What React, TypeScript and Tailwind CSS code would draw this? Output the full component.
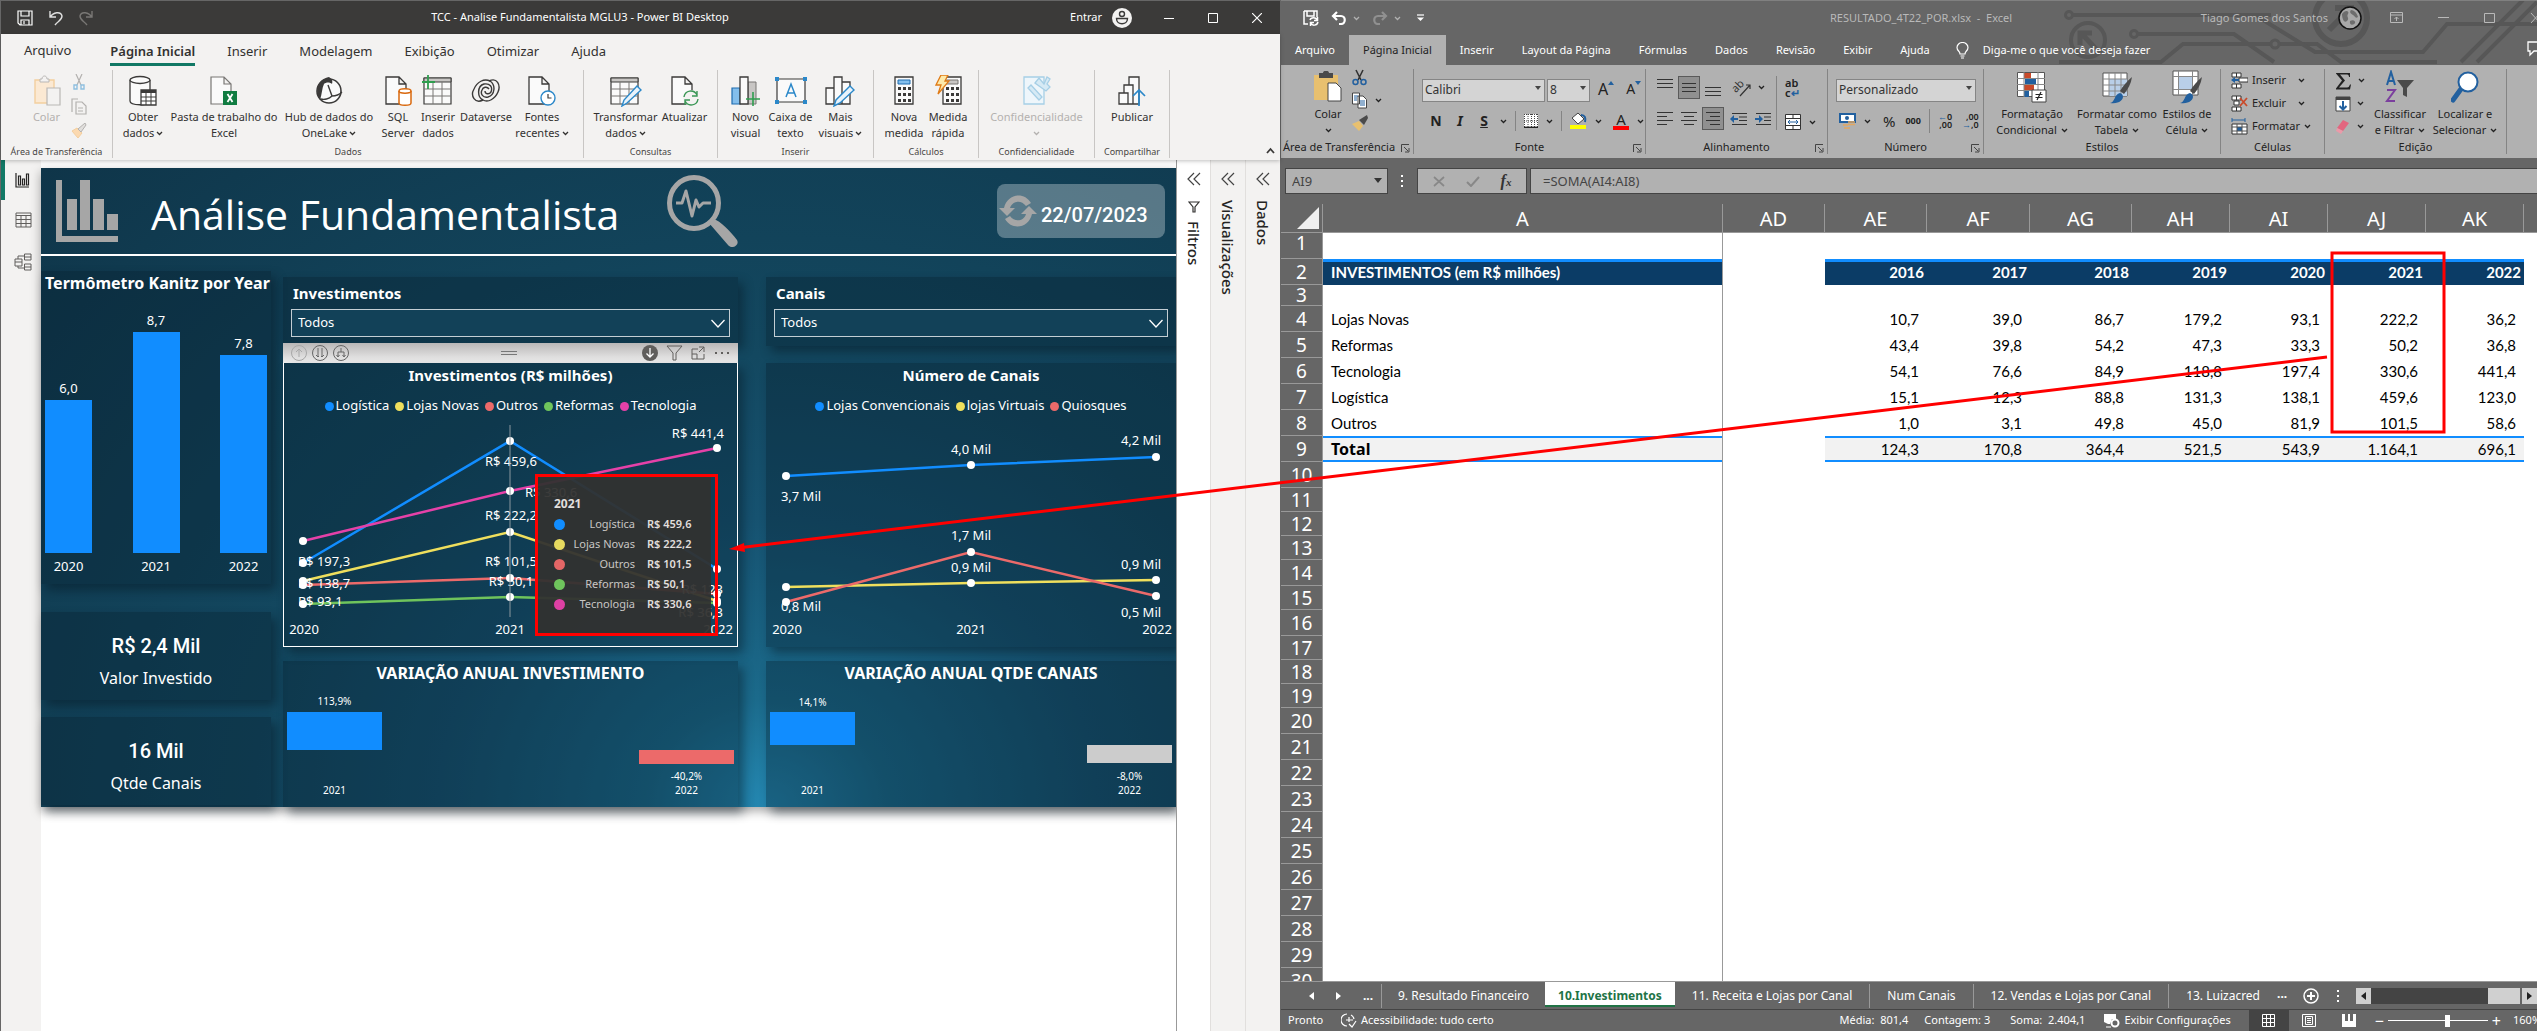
import React from "react";

type Kids = { children?: React.ReactNode };

/* ---------- shared bits ---------- */

function Svg({ w, h, vb, className = "", children }: Kids & { w: number; h: number; vb?: string; className?: string }) {
  return (
    <svg width={w} height={h} viewBox={vb ?? `0 0 ${w} ${h}`} fill="none" className={`shrink-0 ${className}`} aria-hidden="true">
      {children}
    </svg>
  );
}

function Chevron({ className = "" }: { className?: string }) {
  return (
    <Svg w={7} h={5} className={`inline-block ${className}`}>
      <path d="M1 1l2.500 2.500L6 1" stroke="currentColor" strokeWidth="1.3" />
    </Svg>
  );
}

/* ---------- Power BI icons ---------- */

const ink = "#3b3a39";

const doc = <path d="M2 2h13l7 7v20H2z M15 2v7h7" fill="#fafafa" stroke={ink} strokeWidth="1.3" />;

const sheet = (
  <>
    <path d="M2 3h27v26H2z" fill="#fafafa" stroke={ink} strokeWidth="1.2" />
    <path d="M2 3h27v4H2z" fill="#c8c6c4" stroke={ink} />
    <path d="M2 14h27M2 21h27M11 7v22M20 7v22" stroke="#797775" />
  </>
);

const pencil = <path d="M13 31l2-6L28 11l4 4-14 13z" fill="#e8f3fb" stroke="#2b88c9" strokeWidth="1.4" />;

const pasteIcon = (
  <Svg w={28} h={32}>
    <path d="M2 5h19v23H2z" fill="#fbe9d3" stroke="#f3cf9f" strokeWidth="1.4" />
    <path d="M7 7V4h2c0-4 5-4 5 0h2v3z" fill="#f3f2f1" stroke="#b9b7b5" />
    <path d="M14 13h13v17H14z" fill="#f3f2f1" stroke="#b9b7b5" strokeWidth="1.2" />
  </Svg>
);
const getDataIcon = (
  <Svg w={28} h={32}>
    <path d="M1 5v21c0 5 20 5 20 0V5" fill="#fafafa" stroke={ink} strokeWidth="1.3" />
    <ellipse cx="11" cy="5" rx="10" ry="3.5" fill="#fafafa" stroke={ink} strokeWidth="1.3" />
    <path d="M12 15h15v15H12z" fill="#fff" stroke={ink} strokeWidth="1.3" />
    <path d="M12 15h15v3H12z" fill={ink} />
    <path d="M12 22h15M12 26h15M17 18v12M22 18v12" stroke={ink} />
  </Svg>
);
const excelDocIcon = (
  <Svg w={30} h={32}>
    <path d="M2 2h13l7 7v20H2z M15 2v7h7" fill="#fafafa" stroke="#797775" strokeWidth="1.2" />
    <path d="M14 16h14v14H14z" fill="#107c41" />
    <path d="M18.500 19l5 8M23.500 19l-5 8" stroke="#fff" strokeWidth="1.8" />
  </Svg>
);
const oneLakeIcon = (
  <Svg w={30} h={32}>
    <circle cx="15" cy="16" r="12" fill="#fafafa" stroke={ink} strokeWidth="1.6" />
    <path d="M15 2C4 4 0 15 6 25c2-6 2-12 4-16 2-2 6-2 8 0 1-3 0-5-3-7z" fill={ink} />
    <path d="M14 10l4 11c4 0 7-1 10-4M18 21c-3 3-8 4-11 3" stroke={ink} strokeWidth="1.4" />
  </Svg>
);
const sqlIcon = (
  <Svg w={29} h={32}>
    {doc}
    <path d="M15 16v12c0 3 12 3 12 0V16" fill="#fff" stroke="#d9680d" strokeWidth="1.5" />
    <ellipse cx="21" cy="16" rx="6" ry="2.200" fill="#fff" stroke="#d9680d" strokeWidth="1.5" />
  </Svg>
);
const enterDataIcon = (
  <Svg w={32} h={32}>
    {sheet}
    <path d="M6 0v14M-1 7h14" stroke="#2f9e4f" strokeWidth="1.800" />
  </Svg>
);
const dataverseIcon = (
  <Svg w={30} h={32}>
    <path d="M12 25C4 29-1 21 3 14 6 7 13 3 19 6c6 4 5 14-2 16-5 1-8-3-6-7 1-3 5-4 7-1" stroke={ink} strokeWidth="1.4" />
    <path d="M18 6c8-4 12 4 9 11-3 7-10 11-15 8-6-3-6-14 1-16 6-1 9 3 7 8-2 3-6 2-6-1" stroke={ink} strokeWidth="1.4" />
  </Svg>
);
const recentIcon = (
  <Svg w={30} h={32}>
    {doc}
    <circle cx="21" cy="23" r="7" fill="#fff" stroke="#2b88c9" strokeWidth="1.4" />
    <path d="M21 19v4h3.500" stroke={ink} strokeWidth="1.2" />
  </Svg>
);
const transformIcon = (
  <Svg w={33} h={32}>
    {sheet}
    {pencil}
  </Svg>
);
const refreshIcon = (
  <Svg w={30} h={32}>
    {doc}
    <circle cx="21" cy="23" r="8" fill="#f3f2f1" />
    <path d="M14 22c1-7 10-8 13-2M28 24c-1 7-10 8-13 2M27 16v5h-5M15 30v-5h5" stroke="#3a9655" strokeWidth="1.4" />
  </Svg>
);
const newVisualIcon = (
  <Svg w={30} h={32}>
    <path d="M1 13h8v16H1z" fill="#83beec" stroke="#1f6cb0" strokeWidth="1.2" />
    <path d="M17 7h8v22h-8z" fill="#c8c6c4" stroke="#797775" />
    <path d="M9 2h8v27H9z" fill="#fafafa" stroke={ink} strokeWidth="1.3" />
    <path d="M22 17v14M15 24h14" stroke="#2f9e4f" strokeWidth="1.6" />
  </Svg>
);
const textBoxIcon = (
  <Svg w={32} h={32}>
    <path d="M2 4h28v23H2z" fill="#fafafa" stroke={ink} strokeWidth="1.2" />
    <path d="M0 2h4v4H0zM28 2h4v4h-4zM0 25h4v4H0zM28 25h4v4h-4z" fill="#2b88c9" />
    <path d="M11 22l5-13 5 13M13 18h6" stroke="#2b88c9" strokeWidth="1.500" />
  </Svg>
);
const moreVisualsIcon = (
  <Svg w={32} h={32}>
    <path d="M1 13h8v16H1zM17 7h8v22h-8zM9 2h8v27H9z" fill="#fafafa" stroke={ink} strokeWidth="1.3" />
    <path d="M9 31l2-6 14-14 4 4-14 13z" fill="#e8f3fb" stroke="#2b88c9" strokeWidth="1.400" />
  </Svg>
);
const calcKeys = "M4 12h3v3H4zM9 12h3v3H9zM14 12h3v3h-3zM4 18h3v3H4zM9 18h3v3H9zM14 18h3v3h-3zM4 24h3v3H4zM9 24h3v3H9zM14 24h3v3h-3z";
const calcIcon = (
  <Svg w={20} h={32}>
    <path d="M1 2h18v27H1z" fill="#fafafa" stroke={ink} strokeWidth="1.3" />
    <path d="M4 5h12v4H4z" fill="#83beec" stroke="#1f6cb0" />
    <path d={calcKeys} fill={ink} />
  </Svg>
);
const quickCalcIcon = (
  <Svg w={27} h={32} vb="-7 0 27 32">
    <path d="M1 2h18v27H1z" fill="#fafafa" stroke={ink} strokeWidth="1.3" />
    <path d="M4 5h12v4H4z" fill="#c8c6c4" stroke="#797775" />
    <path d={calcKeys} fill={ink} />
    <path d="M-1 0h7l-3 6h4l-11 13 3-9h-5z" fill="#fde9a9" stroke="#e07b16" strokeWidth="1.3" />
  </Svg>
);
const sensitivityIcon = (
  <Svg w={28} h={32}>
    <path d="M1 2h20v27H1z" fill="#eef6fb" stroke="#a6cfe6" strokeWidth="1.3" />
    <path d="M5 13l3-3 11 12-3 3zM12 8l4-5 5 6 3-7 3 2-3 5 3 3-4 4z" fill="#d6eaf5" stroke="#a6cfe6" strokeWidth="1.3" />
  </Svg>
);
const publishIcon = (
  <Svg w={28} h={32}>
    <path d="M1 18h9v11H1zM6 18v-8h9v19h-5M11 10V2h10v27h-6" fill="#fafafa" stroke={ink} strokeWidth="1.3" />
    <path d="M21 31V15M15 21l6-6 6 6" stroke="#2b88c9" strokeWidth="1.700" />
  </Svg>
);

/* ---------- Power BI ribbon ---------- */

function BigButton({ icon, l1, l2, caret, w, off }: { icon: React.ReactNode; l1: string; l2?: string; caret?: boolean; w: string; off?: boolean }) {
  return (
    <button className={`flex shrink-0 flex-col items-center whitespace-nowrap text-[11px] leading-4 ${w} ${off ? "text-[#b3b1af]" : "text-[#323130]"}`}>
      <span className="mb-0.5 flex h-[33px] items-end">{icon}</span>
      <span>{l1}</span>
      <span className="flex h-4 items-center gap-0.5">
        {l2}
        {caret && <Chevron />}
      </span>
    </button>
  );
}

function PbiGroup({ label, w, children }: Kids & { label: string; w: string }) {
  return (
    <section className={`flex shrink-0 flex-col border-r border-[#c8c6c4] ${w}`}>
      <div className="flex flex-1 justify-center pt-1">{children}</div>
      <h3 className="text-center text-[9px] leading-3 text-[#484644]">{label}</h3>
    </section>
  );
}

function PbiRibbon() {
  const tabs = ["Página Inicial", "Inserir", "Modelagem", "Exibição", "Otimizar", "Ajuda"];
  return (
    <header className="relative z-10 bg-[#f3f2f1] shadow-[0_1px_4px_rgba(0,0,0,0.25)]">
      <nav className="flex h-8 items-start pl-1 text-[13px] leading-8 text-[#323130]">
        <button className="mr-1 h-8 px-[19px]">Arquivo</button>
        {tabs.map((t, i) => (
          <button key={t} className={`h-8 px-4 ${i === 0 ? "font-semibold" : ""}`}>
            <span className={`block h-[31px] ${i === 0 ? "border-b-[3px] border-[#117865]" : ""}`}>{t}</span>
          </button>
        ))}
      </nav>
      <div className="flex h-[94px] items-stretch pt-1 pb-0.5">
        <PbiGroup label="Área de Transferência" w="w-28">
          <BigButton icon={pasteIcon} l1="Colar" w="w-10" off />
          <div className="ml-1 flex flex-col items-center gap-2">
            <button aria-label="Recortar">
              <Svg w={12} h={16}>
                <path d="M3 0l5 11M9 0L4 11" stroke="#b3b1af" strokeWidth="1.2" />
                <path d="M1 11h3v4H1zM8 11h3v4H8z" stroke="#8fc0e0" strokeWidth="1.4" />
              </Svg>
            </button>
            <button aria-label="Copiar">
              <Svg w={16} h={17}>
                <path d="M1 14V1h6M5 4h6l4 4v8H5zM7 10h5M7 13h5" stroke="#b3b1af" strokeWidth="1.2" />
              </Svg>
            </button>
            <button aria-label="Pincel de formatação">
              <Svg w={16} h={16}>
                <path d="M1 8l5-3 5 5-4 5z" fill="#fbd9b0" stroke="#f3cf9f" />
                <path d="M7 6l7-6 1 2-5 7z" fill="#e1dfdd" stroke="#b3b1af" />
              </Svg>
            </button>
          </div>
        </PbiGroup>
        <PbiGroup label="Dados" w="w-[471px]">
          <div className="-ml-2 flex">
            <BigButton icon={getDataIcon} l1="Obter" l2="dados" caret w="w-[50px]" />
            <BigButton icon={excelDocIcon} l1="Pasta de trabalho do" l2="Excel" w="w-28" />
            <BigButton icon={oneLakeIcon} l1="Hub de dados do" l2="OneLake" caret w="w-[98px]" />
            <BigButton icon={sqlIcon} l1="SQL" l2="Server" w="w-10" />
            <BigButton icon={enterDataIcon} l1="Inserir" l2="dados" w="w-10" />
            <BigButton icon={dataverseIcon} l1="Dataverse" w="w-14" />
            <BigButton icon={recentIcon} l1="Fontes" l2="recentes" caret w="w-14" />
          </div>
        </PbiGroup>
        <PbiGroup label="Consultas" w="w-[134px]">
          <BigButton icon={transformIcon} l1="Transformar" l2="dados" caret w="w-[68px]" />
          <BigButton icon={refreshIcon} l1="Atualizar" w="w-[50px]" />
        </PbiGroup>
        <PbiGroup label="Inserir" w="w-[156px]">
          <BigButton icon={newVisualIcon} l1="Novo" l2="visual" w="w-10" />
          <BigButton icon={textBoxIcon} l1="Caixa de" l2="texto" w="w-[50px]" />
          <BigButton icon={moreVisualsIcon} l1="Mais" l2="visuais" caret w="w-[50px]" />
        </PbiGroup>
        <PbiGroup label="Cálculos" w="w-[105px]">
          <BigButton icon={calcIcon} l1="Nova" l2="medida" w="w-11" />
          <BigButton icon={quickCalcIcon} l1="Medida" l2="rápida" w="w-11" />
        </PbiGroup>
        <PbiGroup label="Confidencialidade" w="w-[116px]">
          <BigButton icon={sensitivityIcon} l1="Confidencialidade" caret w="w-24" off />
        </PbiGroup>
        <PbiGroup label="Compartilhar" w="w-[75px]">
          <BigButton icon={publishIcon} l1="Publicar" w="w-14" />
        </PbiGroup>
        <button aria-label="Recolher faixa" className="mr-1 ml-auto self-end pb-1">
          <Svg w={11} h={7}>
            <path d="M2 6l3.500-4L9 6" stroke={ink} strokeWidth="1.800" />
          </Svg>
        </button>
      </div>
    </header>
  );
}

function PbiTitleBar() {
  return (
    <div className="grid h-[34px] grid-cols-[426fr_auto_546fr] items-center border-t border-[#666] bg-[#3b3a39] text-[11px] text-white">
      <div className="flex items-center gap-4 pl-4">
        <button aria-label="Salvar">
          <Svg w={16} h={16}>
            <path d="M1 1h14v14H3l-2-2zM4 1v5h8V1M4 15v-5h8v5M7 11v3" stroke="#fff" strokeWidth="1.2" />
          </Svg>
        </button>
        <button aria-label="Desfazer">
          <Svg w={14} h={16}>
            <path d="M1 1v6h6M1.500 7C4 2 12 1 13 6c0 4-4 5-7 9" stroke="#e0e0e0" strokeWidth="1.4" />
          </Svg>
        </button>
        <button aria-label="Refazer">
          <Svg w={14} h={16}>
            <path d="M13 1v6H7M12.500 7C10 2 2 1 1 6c0 4 4 5 7 9" stroke="#797775" strokeWidth="1.400" />
          </Svg>
        </button>
      </div>
      <h1>TCC - Analise Fundamentalista MGLU3 - Power BI Desktop</h1>
      <div className="flex items-center justify-end pr-[18px]">
        <button className="flex items-center gap-2.5">
          Entrar
          <Svg w={20} h={20}>
            <circle cx="10" cy="10" r="10" fill="#f3f2f1" />
            <circle cx="10" cy="6" r="2.500" stroke={ink} strokeWidth="1.400" />
            <path d="M4.500 10.500h11c0 7-11 7-11 0z" stroke={ink} strokeWidth="1.400" />
          </Svg>
        </button>
        <button aria-label="Minimizar" className="ml-8"><Svg w={10} h={10}><path d="M0 5.500h10" stroke="#fff" /></Svg></button>
        <button aria-label="Maximizar" className="ml-[34px]"><Svg w={10} h={10}><path d="M.5.5h9v9h-9z" stroke="#fff" /></Svg></button>
        <button aria-label="Fechar" className="ml-[34px]"><Svg w={10} h={10}><path d="M0 0l10 10M10 0L0 10" stroke="#fff" strokeWidth="1.200" /></Svg></button>
      </div>
    </div>
  );
}

/* ---------- dashboard ---------- */

const panel = "bg-[#061c2a]/35 shadow-[5px_6px_10px_rgba(5,20,30,0.45)]";

const BLUE = "#118dff";
const YELLOW = "#efdf5d";
const RED = "#ec6a6a";
const GREEN = "#6fc45c";
const PINK = "#e541a8";

type Series = { color: string; pts: [number, number][] };
type Note = { t: string; x: number; y: number; a?: "start" | "middle" | "end" };

function LineChart({ vb, series, notes, guide, label }: { vb: string; series: Series[]; notes: Note[]; guide?: number; label: string }) {
  return (
    <svg viewBox={vb} className="block w-full" role="img" aria-label={label}>
      {series.map((s) => (
        <polyline key={s.color} points={s.pts.map((p) => p.join(",")).join(" ")} fill="none" stroke={s.color} strokeWidth="2.500" />
      ))}
      {notes.map((n) => (
        <text key={n.t + n.y + n.x} x={n.x} y={n.y + 5} textAnchor={n.a ?? "middle"} fontSize="13" fill="#fff">
          {n.t}
        </text>
      ))}
      {series.flatMap((s) => s.pts.map((p) => <circle key={s.color + p[0]} cx={p[0]} cy={p[1]} r="4" fill="#fff" />))}
      {guide && <path d={`M${guide} 425V617`} stroke="#8a979e" />}
    </svg>
  );
}

function Legend({ items }: { items: [string, string][] }) {
  return (
    <ul className="flex h-9 items-center justify-center gap-1.5 pt-0.5 text-[13px] whitespace-nowrap">
      {items.map(([t, c]) => (
        <li key={t} className="flex items-center gap-0.5">
          <span className={`size-[9px] rounded-full ${c}`} />
          {t}
        </li>
      ))}
    </ul>
  );
}

function Slicer({ label, id, h }: { label: string; id: string; h: string }) {
  return (
    <div className={`${panel} ${h} px-2 pt-1.5`}>
      <label htmlFor={id} className="block h-[26px] pl-0.5 text-[15px] leading-5 font-bold">{label}</label>
      <div className="relative">
        <select id={id} className="block h-7 w-full appearance-none border border-[#c3ced4] bg-[#124158] px-1.5 text-[13px] text-white">
          <option>Todos</option>
        </select>
        <Svg w={16} h={10} className="pointer-events-none absolute top-2.5 right-1">
          <path d="M1.500 1L8 8l6.500-7" stroke="#fff" strokeWidth="1.300" />
        </Svg>
      </div>
    </div>
  );
}

function Tooltip() {
  const rows: [string, string, string][] = [
    ["Logística", "R$ 459,6", "bg-[#118dff]"],
    ["Lojas Novas", "R$ 222,2", "bg-[#e6d95f]"],
    ["Outros", "R$ 101,5", "bg-[#e46666]"],
    ["Reformas", "R$ 50,1", "bg-[#6fc45c]"],
    ["Tecnologia", "R$ 330,6", "bg-[#dd40a4]"],
  ];
  return (
    <div className="absolute top-[111px] left-[251px] h-[162px] w-[183px] border-[3px] border-[#f00]">
      <div className="mr-1 h-full bg-[#323130]/95 px-4 pt-[17px] text-[#e1dfdd]">
        <h4 className="text-[12px] leading-5 font-bold">2021</h4>
        <table className="w-full table-fixed text-[11px] whitespace-nowrap">
          <colgroup>
            <col className="w-3" />
            <col />
            <col className="w-[60px]" />
          </colgroup>
          <tbody>
            {rows.map(([n, v, c]) => (
              <tr key={n} className="h-5">
                <td className="p-0"><span className={`block size-[11px] rounded-full ${c}`} /></td>
                <td className="p-0 text-right text-[#c8c6c4]">{n}</td>
                <td className="p-0 pl-3 font-semibold">{v}</td>
              </tr>
            ))}
          </tbody>
        </table>
      </div>
    </div>
  );
}

function VisualHeader() {
  return (
    <div className="flex h-5 items-center bg-gradient-to-b from-[#b9b7b7] to-[#f0f0f0] px-2">
      <Svg w={66} h={18} className="-ml-1">
        <circle cx="12" cy="9" r="7.500" stroke="#a8a8a8" />
        <path d="M12 13V5M9 8l3-3 3 3" stroke="#a8a8a8" />
        <circle cx="33" cy="9" r="7.500" stroke="#666" />
        <path d="M31 4v9M29 11l2 2 1-1M35 4v9M34 12l1 1 2-2" stroke="#666" />
        <circle cx="54" cy="9" r="7.500" stroke="#666" />
        <path d="M54 4v4M51 12V8h6v4M49.500 11l1.500 2 1.500-2M55.500 11l1.500 2 1.500-2" stroke="#666" />
      </Svg>
      <span className="mr-auto ml-[148px] h-1 w-4 border-y border-[#777]" />
      <Svg w={88} h={18}>
        <circle cx="8" cy="9" r="8" fill="#605e5c" />
        <path d="M8 4v9M4.500 9.500L8 13l3.500-3.500" stroke="#fff" strokeWidth="1.300" />
        <path d="M25 2h15l-6 7v7h-3V9z" stroke="#605e5c" />
        <path d="M56 5h-6v10h12v-5M50 10h5v5M57 3h5v5M57 8l5-5" stroke="#605e5c" />
        <path d="M73 8h2v2h-2zM79 8h2v2h-2zM85 8h2v2h-2z" fill="#605e5c" />
      </Svg>
    </div>
  );
}

type Bar = { x: number; y: number; w: number; h: number; fill: string; v: string; vy: number; year: string };

function Waterfall({ title, vb, bars }: { title: string; vb: string; bars: Bar[] }) {
  return (
    <section className={`h-[146px] overflow-hidden ${panel}`}>
      <h2 className="text-center text-base leading-6 font-bold whitespace-nowrap">{title}</h2>
      <svg viewBox={vb} className="block w-full" role="img" aria-label={title}>
        {bars.map((b) => (
          <g key={b.year} fontSize="10" textAnchor="middle" fill="#fff">
            <rect x={b.x} y={b.y} width={b.w} height={b.h} fill={b.fill} />
            <text x={b.x + b.w / 2} y={b.vy + 4}>{b.v}</text>
            <text x={b.x + b.w / 2} y={794}>{b.year}</text>
          </g>
        ))}
      </svg>
    </section>
  );
}

function KanitzPanel() {
  const bars = [
    { v: "6,0", y: "2020", h: 153 },
    { v: "8,7", y: "2021", h: 221 },
    { v: "7,8", y: "2022", h: 198 },
  ];
  return (
    <section className={`h-[313px] px-1 ${panel}`}>
      <h2 className="text-center text-base leading-6 font-bold whitespace-nowrap">Termômetro Kanitz por Year</h2>
      <div className="flex h-[284px] items-end justify-between text-center text-[13px]">
        {bars.map((b) => (
          <div key={b.y} className="w-[47px]">
            <div className="leading-6">{b.v}</div>
            <div className="bg-[#118dff]" style={{ height: b.h }} />
            <div className="leading-[26px]">{b.y}</div>
          </div>
        ))}
      </div>
    </section>
  );
}

function Kpi({ value, label, gap }: { value: string; label: string; gap: string }) {
  return (
    <section className={`h-[88px] pt-[22px] text-center ${gap} ${panel}`}>
      <p className="font-[Roboto] text-xl leading-6 font-medium">{value}</p>
      <p className="mt-2 text-base leading-6">{label}</p>
    </section>
  );
}

function Dashboard() {
  return (
    <div className="bg-[radial-gradient(ellipse_at_64%_100%,#2488b2_0%,#1b6a8b_12%,#165270_32%,#134860_50%,#0f3549_100%)] text-white shadow-[0_4px_10px_rgba(0,0,0,0.35)]">
      <header className="flex h-[88px] items-center border-b-2 border-white pr-[11px] pl-[15px]">
        <Svg w={62} h={62} className="mr-[33px]">
          <path d="M0 0h6v56h56v6H0zM11 19h10v31H11zM24 0h10v50H24zM37 19h11v31H37zM51 34h11v16H51z" fill="#a6a6a6" />
        </Svg>
        <h1 className="pt-1.5 font-['Open_Sans'] text-[41px] leading-none whitespace-nowrap">Análise Fundamentalista</h1>
        <Svg w={72} h={72} className="ml-12">
          <ellipse cx="27" cy="28" rx="24.500" ry="25.500" stroke="#a6a6a6" strokeWidth="5" />
          <path d="M9 28h6l4-12 6 25 4-16 3 7 4-4h8" stroke="#a6a6a6" strokeWidth="3" strokeLinejoin="round" />
          <path d="M42 48l4-4c8 2 17 12 24 21 3 5-5 10-9 5z" fill="#a6a6a6" />
        </Svg>
        <button className="ml-auto flex h-[54px] w-[168px] items-center gap-1 rounded-lg bg-white/30 pl-0.5">
          <Svg w={38} h={34}>
            <path d="M5 14C8 0 25-3 32 9l-5 3C22 5 13 7 11 14h5l-8 8-8-8z" fill="#a6a6a6" />
            <path d="M33 20C30 34 13 37 6 25l5-3c5 7 14 5 16-2h-5l8-8 8 8z" fill="#a6a6a6" />
          </Svg>
          <span className="pt-2 font-[Roboto] text-xl font-medium">22/07/2023</span>
        </button>
      </header>
      <div className="flex items-start">
        <div className="min-w-0 flex-[230] pt-[15px]">
          <KanitzPanel />
          <Kpi value="R$ 2,4 Mil" label="Valor Investido" gap="mt-7" />
          <Kpi value="16 Mil" label="Qtde Canais" gap="mt-[17px]" />
        </div>
        <div className="ml-3 min-w-0 flex-[455] pt-[21px]">
          <Slicer label="Investimentos" id="slicer-inv" h="h-[66px]" />
          <VisualHeader />
          <section className={`relative h-[284px] border border-t-0 border-white ${panel}`}>
            <h2 className="text-center text-[15px] leading-6 font-bold">Investimentos (R$ milhões)</h2>
            <Legend
              items={[
                ["Logística", "bg-[#118dff]"],
                ["Lojas Novas", "bg-[#efdf5d]"],
                ["Outros", "bg-[#ec6a6a]"],
                ["Reformas", "bg-[#6fc45c]"],
                ["Tecnologia", "bg-[#e541a8]"],
              ]}
            />
            <LineChart
              label="Investimentos por ano"
              vb="284 423 453 223"
              guide={510}
              series={[
                { color: BLUE, pts: [[303, 563], [510, 441], [717, 569]] },
                { color: YELLOW, pts: [[303, 581], [510, 532], [717, 601]] },
                { color: RED, pts: [[303, 585], [510, 578], [717, 594]] },
                { color: GREEN, pts: [[303, 604], [510, 597], [717, 603]] },
                { color: PINK, pts: [[303, 541], [510, 491], [717, 448]] },
              ]}
              notes={[
                { t: "R$ 459,6", x: 511, y: 461 },
                { t: "R$ 441,4", x: 724, y: 433, a: "end" },
                { t: "R$ 330,6", x: 525, y: 492, a: "start" },
                { t: "R$ 222,2", x: 511, y: 515 },
                { t: "R$ 101,5", x: 511, y: 561 },
                { t: "R$ 50,1", x: 511, y: 581 },
                { t: "R$ 197,3", x: 298, y: 561, a: "start" },
                { t: "R$ 138,7", x: 298, y: 583, a: "start" },
                { t: "R$ 93,1", x: 298, y: 601, a: "start" },
                { t: "R$ 123", x: 723, y: 589, a: "end" },
                { t: "R$ 36,3", x: 723, y: 612, a: "end" },
                { t: "2020", x: 304, y: 629 },
                { t: "2021", x: 510, y: 629 },
                { t: "2022", x: 718, y: 629 },
              ]}
            />
            <Tooltip />
          </section>
          <div className="h-3.5" />
          <Waterfall
            title="VARIAÇÃO ANUAL INVESTIMENTO"
            vb="283 685 455 122"
            bars={[
              { x: 287, y: 712, w: 95, h: 38, fill: BLUE, v: "113,9%", vy: 701, year: "2021" },
              { x: 639, y: 750, w: 95, h: 14, fill: RED, v: "-40,2%", vy: 776, year: "2022" },
            ]}
          />
        </div>
        <div className="ml-7 min-w-0 flex-[410] pt-[21px]">
          <Slicer label="Canais" id="slicer-can" h="h-[69px]" />
          <section className={`mt-[17px] h-[284px] ${panel}`}>
            <h2 className="text-center text-[15px] leading-6 font-bold">Número de Canais</h2>
            <Legend
              items={[
                ["Lojas Convencionais", "bg-[#118dff]"],
                ["lojas Virtuais", "bg-[#efdf5d]"],
                ["Quiosques", "bg-[#ec6a6a]"],
              ]}
            />
            <LineChart
              label="Número de canais por ano"
              vb="766 423 410 223"
              series={[
                { color: BLUE, pts: [[786, 476], [971, 465], [1156, 457]] },
                { color: YELLOW, pts: [[786, 587], [971, 583], [1156, 580]] },
                { color: RED, pts: [[786, 602], [971, 552], [1156, 596]] },
              ]}
              notes={[
                { t: "3,7 Mil", x: 801, y: 496 },
                { t: "4,0 Mil", x: 971, y: 449 },
                { t: "4,2 Mil", x: 1141, y: 440 },
                { t: "1,7 Mil", x: 971, y: 535 },
                { t: "0,9 Mil", x: 971, y: 567 },
                { t: "0,9 Mil", x: 1141, y: 564 },
                { t: "0,8 Mil", x: 801, y: 606 },
                { t: "0,5 Mil", x: 1141, y: 612 },
                { t: "2020", x: 787, y: 629 },
                { t: "2021", x: 971, y: 629 },
                { t: "2022", x: 1157, y: 629 },
              ]}
            />
          </section>
          <div className="h-3.5" />
          <Waterfall
            title="VARIAÇÃO ANUAL QTDE CANAIS"
            vb="766 685 410 122"
            bars={[
              { x: 770, y: 712, w: 85, h: 33, fill: BLUE, v: "14,1%", vy: 702, year: "2021" },
              { x: 1087, y: 745, w: 85, h: 18, fill: "#cccccc", v: "-8,0%", vy: 776, year: "2022" },
            ]}
          />
        </div>
      </div>
    </div>
  );
}

function SidePane({ label, filter, className }: { label: string; filter?: boolean; className: string }) {
  return (
    <button className={`flex shrink-0 flex-col items-center border-l pt-3 text-[15px] text-[#252423] ${className}`}>
      <Svg w={14} h={14}>
        <path d="M7 1L1 7l6 6M13 1L7 7l6 6" stroke="#444" strokeWidth="1.200" />
      </Svg>
      {filter && (
        <Svg w={12} h={12} className="mt-[15px] -mb-1.5">
          <path d="M1 1h10L7 6v5H5V6z" stroke="#323130" strokeWidth="1.200" />
        </Svg>
      )}
      <span className="mt-[14px] font-medium [writing-mode:vertical-rl]">{label}</span>
    </button>
  );
}

function PowerBi() {
  return (
    <main className="flex min-w-0 flex-col border-x border-[#666] bg-white">
      <PbiTitleBar />
      <PbiRibbon />
      <div className="flex flex-1">
        <nav className="flex w-10 shrink-0 flex-col items-center gap-[25px] bg-[#f3f2f1]">
          <button aria-label="Relatório" className="-mb-[13px] h-10 w-full border-l-4 border-[#117865] pl-2.5">
            <Svg w={15} h={15}>
              <path d="M1 0v14h13M3.500 3h2v9h-2zM7.500 6h2v6h-2zM11.500 1h2v11h-2z" stroke="#252423" strokeWidth="1.200" />
            </Svg>
          </button>
          <button aria-label="Dados" className="pl-1">
            <Svg w={17} h={16}>
              <path d="M1 1h15v14H1zM1 3.500h15M1 7.500h15M1 11.500h15M6 3.500V15M11 3.500V15" stroke="#605e5c" />
            </Svg>
          </button>
          <button aria-label="Modelo" className="pl-1">
            <Svg w={18} h={18}>
              <path d="M1 6h7v7H1zM1 9h7M10.500 1H17v6h-6.500zM10.500 4H17M10.500 11H17v6h-6.500zM10.500 14H17M4 6V3h6M4 13v2h6" stroke="#605e5c" />
            </Svg>
          </button>
        </nav>
        <div className="min-w-0 flex-1 pt-2">
          <Dashboard />
        </div>
        <SidePane label="Filtros" filter className="w-[34px] border-[#999] bg-white" />
        <SidePane label="Visualizações" className="w-[35px] border-[#e1dfdd] bg-[#f3f2f1]" />
        <SidePane label="Dados" className="w-[35px] border-[#e1dfdd] bg-[#f3f2f1]" />
      </div>
    </main>
  );
}

/* ---------- Excel ---------- */

function Circuit() {
  return (
    <Svg w={490} h={64} className="absolute top-0 right-0">
      <g stroke="#575757" strokeWidth="4">
        <circle cx="22" cy="15" r="3.500" strokeWidth="3" />
        <path d="M26 15h160l38 0" />
        <circle cx="41" cy="40" r="17" />
        <path d="M50 50L34 33M33 45V33h12" strokeWidth="5" />
        <circle cx="87" cy="34" r="3.500" strokeWidth="3" />
        <path d="M91 34h96l40 28" />
        <path d="M12 62h102l22-18h88M232 44h38l24 18h96" />
        <circle cx="228" cy="44" r="4" strokeWidth="3" />
        <circle cx="294" cy="18" r="26" strokeWidth="6" />
        <path d="M282 30l20-20M288 8h16v16" strokeWidth="6" />
        <path d="M186 15h22l60 37h108l24-28h90" />
        <path d="M414 62l62-62M430 62l60-60" />
      </g>
    </Svg>
  );
}

function XlTitle() {
  return (
    <div className="relative grid h-[35px] grid-cols-[548fr_auto_524fr] items-center border-t border-[#808080] text-xs text-[#b9b9b9]">
      <div className="flex items-center pl-[22px] text-white">
        <Svg w={16} h={16}>
          <path d="M1 1h13v6M1 1v13h4M4 1v5h7V1" stroke="#fff" strokeWidth="1.500" />
          <path d="M7 10c1-3 6-3 7 0M15 12c-1 4-6 4-7 1M14.500 7v3.500H11M7.500 16v-3.500H11" stroke="#fff" strokeWidth="1.500" />
        </Svg>
        <Svg w={16} h={14} className="ml-3">
          <path d="M6 1L2 5l4 4M2 5h8c5 0 5 8 0 8H8" stroke="#fff" strokeWidth="2.200" />
        </Svg>
        <Chevron className="ml-1.5 text-[#b1b1b1]" />
        <Svg w={16} h={14} className="ml-3">
          <path d="M10 1l4 4-4 4M14 5H6c-5 0-5 8 0 8h2" stroke="#909090" strokeWidth="2.200" />
        </Svg>
        <Chevron className="ml-1.5 text-[#b1b1b1]" />
        <Svg w={7} h={8} className="ml-4">
          <path d="M0 1h7" stroke="#fff" strokeWidth="1.200" />
          <path d="M0 3.500h7L3.500 7z" fill="#fff" />
        </Svg>
      </div>
      <h1 className="whitespace-pre text-[11px]">RESULTADO_4T22_POR.xlsx  -  Excel</h1>
      <div className="flex items-center justify-end overflow-hidden text-[11px]">
        <button className="flex items-center gap-2.5 whitespace-nowrap">
          Tiago Gomes dos Santos
          <Svg w={24} h={24}>
            <circle cx="12" cy="12" r="11" fill="#a8a8a8" stroke="#111" strokeWidth="1.500" />
            <path d="M4 8c3-5 8-3 6 0s2 4-1 7-5-3-5-7zM13 4c3 0 6 3 7 7-3 2-3-1-5-2s-4-3-2-5zM12 15c3-2 6 0 5 2s-6 3-5-2z" fill="#6d6d6d" />
          </Svg>
        </button>
        <Svg w={13} h={12} className="ml-7"><path d="M.5.5h12v10H.5zM.5 3h12M6.500 9V5M4.500 7l2-2 2 2" stroke="#b9b9b9" /></Svg>
        <Svg w={11} h={10} className="ml-[35px]"><path d="M0 4.500h11" stroke="#b9b9b9" /></Svg>
        <Svg w={11} h={10} className="ml-[35px]"><path d="M.5.5h10v9H.5z" stroke="#b9b9b9" /></Svg>
        <Svg w={7} h={10} className="ml-[35px]"><path d="M1 0l9 10M10 0L1 10" stroke="#b9b9b9" /></Svg>
      </div>
    </div>
  );
}

function XlTabs() {
  const tabs = ["Arquivo", "Página Inicial", "Inserir", "Layout da Página", "Fórmulas", "Dados", "Revisão", "Exibir", "Ajuda"];
  return (
    <nav className="relative flex h-[30px] items-stretch text-[11px] whitespace-nowrap text-white">
      {tabs.map((t, i) => (
        <button key={t} className={`px-[14px] ${i === 1 ? "bg-[#b1b1b1] text-[#222]" : ""}`}>{t}</button>
      ))}
      <button className="ml-3 flex items-center gap-3.5">
        <Svg w={13} h={17}>
          <path d="M4 12c0-3-3-3-3-6.500a5.500 5 0 0 1 11 0c0 3.500-3 3.500-3 6.500zM4.500 14h4M5 16h3" stroke="#fff" strokeWidth="1.200" />
        </Svg>
        Diga-me o que você deseja fazer
      </button>
      <Svg w={10} h={16} className="mt-1.5 ml-auto">
        <path d="M12 1H1v9h2v4l4-4h5" stroke="#fff" strokeWidth="1.300" />
      </Svg>
    </nav>
  );
}

function XlGroup({ label, w, launcher, children }: Kids & { label: string; w: string; launcher?: boolean }) {
  return (
    <section className={`my-1 flex shrink-0 flex-col border-r border-[#848484] ${w}`}>
      <div className="h-[72px]">{children}</div>
      <h3 className="relative text-center text-[11px] leading-[14px] whitespace-nowrap">
        <span className={label.length > 15 ? "mr-4" : ""}>{label}</span>
        {launcher && (
          <Svg w={9} h={9} className="absolute top-1 right-[3px]">
            <path d="M.5 8V.5H8M3 3l4 4M8 4v4H4" stroke="#444" />
          </Svg>
        )}
      </h3>
    </section>
  );
}

function MiniSelect({ value, label, w }: { value: string; label: string; w: string }) {
  return (
    <span className={`relative block shrink-0 ${w}`}>
      <select aria-label={label} className="h-[23px] w-full appearance-none border border-[#858585] bg-[#d4d4d4] pl-0.5 text-xs text-[#333]">
        <option>{value}</option>
      </select>
      <Svg w={6} h={4} className="pointer-events-none absolute top-2.5 right-1">
        <path d="M0 0h6L3 4z" fill="#444" />
      </Svg>
    </span>
  );
}

function Lines({ ws, boxed, align = "items-start" }: { ws: string[]; boxed?: boolean; align?: string }) {
  return (
    <button aria-label="Alinhamento" className={`flex h-[23px] w-[22px] flex-col justify-center gap-[3px] px-[3px] ${align} ${boxed ? "border border-[#5a5a5a] bg-[#909090]" : ""}`}>
      {ws.map((w, i) => (
        <span key={i} className={`h-px bg-[#333] ${w}`} />
      ))}
    </button>
  );
}

function XlBig({ icon, l1, l2, w }: { icon: React.ReactNode; l1: string; l2?: string; w: string }) {
  return (
    <button className={`flex shrink-0 flex-col items-center text-[11px] leading-4 whitespace-nowrap ${w}`}>
      <span className="mb-0.5 flex h-[35px] items-center">{icon}</span>
      <span>{l1}</span>
      <span className="flex h-4 items-center gap-1">
        {l2}
        <Chevron />
      </span>
    </button>
  );
}

const blueInk = "#22609f";
const brush = (
  <>
    <path d="M30 8c-5 4-9 9-12 14l4 3c4-5 7-10 8-17z" fill="#4a4a4a" />
    <path d="M8 34c5 0 4-9 10-10 6 2 3 12-10 10z" fill={blueInk} />
  </>
);

function XlRibbon() {
  return (
    <div className="relative flex h-[93px] bg-[#b1b1b1] text-[#222]">
      <XlGroup label="Área de Transferência" w="w-[133px]" launcher>
        <div className="flex pl-[29px]">
          <XlBig
            w="w-9"
            l1="Colar"
            icon={
              <Svg w={28} h={31}>
                <path d="M0 4h24v25H0z" fill="#e8c06f" />
                <path d="M5 2h4c0-3 6-3 6 0h4v5H5z" fill="#4a4a4a" />
                <path d="M14 12h8l5 5v13H14z" fill="#fff" stroke="#444" />
              </Svg>
            }
          />
          <div className="ml-1.5 flex flex-col gap-1.5">
            <Svg w={15} h={17}>
              <path d="M4 1l5 10M11 1L6 11" stroke="#333" strokeWidth="1.600" />
              <circle cx="3.500" cy="13" r="2.500" stroke={blueInk} strokeWidth="1.500" />
              <circle cx="11.500" cy="13" r="2.500" stroke={blueInk} strokeWidth="1.500" />
            </Svg>
            <span className="flex items-center gap-2">
              <Svg w={15} h={17}>
                <path d="M.5 1h7v11h-7zM6 4h5l3.500 3.500V16H6z" fill="#fff" stroke="#444" />
                <path d="M8 9h5M8 11h5M8 13h5M2 4h4M2 6h3M2 8h3" stroke={blueInk} />
              </Svg>
              <Chevron />
            </span>
            <Svg w={16} h={17}>
              <path d="M0 9l7-3 4 5-4 5z" fill="#e8c06f" />
              <path d="M7 5l8-5 1 3-4 7z" fill="#4a4a4a" />
            </Svg>
          </div>
        </div>
      </XlGroup>
      <XlGroup label="Fonte" w="w-[232px]" launcher>
        <div className="flex items-center gap-0.5 pt-[7px] pl-2">
          <MiniSelect value="Calibri" label="Fonte" w="w-[123px]" />
          <MiniSelect value="8" label="Tamanho da fonte" w="w-[43px]" />
          <span className="ml-1.5 flex items-start text-base leading-5">A<Svg w={6} h={4} className="mt-0.5"><path d="M0 4h6L3 0z" fill={blueInk} /></Svg></span>
          <span className="ml-2.5 flex items-start text-sm leading-5">A<Svg w={6} h={4} className="mt-0.5"><path d="M0 0h6L3 4z" fill={blueInk} /></Svg></span>
        </div>
        <div className="mt-2 flex h-[23px] items-center pl-[14px] text-sm">
          <button className="w-4 font-bold">N</button>
          <button className="ml-2 w-4 font-bold italic">I</button>
          <button className="ml-2 w-4 font-bold underline">S</button>
          <Chevron className="ml-2" />
          <span className="mx-2 h-5 w-px bg-[#848484]" />
          <Svg w={14} h={14}>
            <path d="M0 0h14v14H0z" fill="#fff" />
            <path d="M.5 0v13M4 0v13M7.500 0v13M10.500 0v13M13.500 0v13M0 .5h14M0 7h14" stroke="#444" strokeDasharray="1 1" />
            <path d="M0 13.300h14" stroke="#222" strokeWidth="1.400" />
          </Svg>
          <Chevron className="ml-2" />
          <span className="mx-2 h-5 w-px bg-[#848484]" />
          <Svg w={17} h={18}>
            <path d="M2 6l6-5 6 6-6 5z" fill="#fff" stroke="#444" />
            <path d="M11 3c4 0 5 3 4 7" stroke={blueInk} strokeWidth="2" />
            <path d="M0 13h16v4H0z" fill="#ff0" />
          </Svg>
          <Chevron className="ml-2" />
          <span className="ml-[11px] flex w-4 flex-col items-center border-b-4 border-[#f00] text-[15px] leading-[14px]">A</span>
          <Chevron className="ml-2" />
        </div>
      </XlGroup>
      <XlGroup label="Alinhamento" w="w-[182px]" launcher>
        <div className="flex pt-[7px] pl-2">
          <div className="flex w-[122px] flex-col gap-2">
            <div className="flex items-center gap-[2px]">
              <Lines ws={["w-full", "w-full", "w-full"]} align="items-center pb-2" />
              <Lines ws={["w-full", "w-full", "w-full"]} boxed />
              <Lines ws={["w-full", "w-full", "w-full"]} align="items-center pt-2" />
              <Svg w={18} h={18} className="ml-2 overflow-visible">
                <text x="0" y="10" fontSize="11" fill="#333" transform="rotate(-45 6 10)">ab</text>
                <path d="M6 17L16 6M12 6h4v4" stroke="#333" strokeWidth="1.200" />
              </Svg>
              <Chevron className="ml-1" />
            </div>
            <div className="flex items-center gap-[2px]">
              <Lines ws={["w-full", "w-2.5", "w-full", "w-2.5"]} />
              <Lines ws={["w-full", "w-2.5", "w-full", "w-2.5"]} align="items-center" />
              <Lines ws={["w-full", "w-2.5", "w-full", "w-2.5"]} boxed align="items-end" />
              <Svg w={18} h={14} className="ml-1">
                <path d="M2 1.500h15M9 5h8M9 8.500h8M2 12.500h15" stroke="#333" strokeWidth="1.200" />
                <path d="M0 7l4-4v3h4v2H4v3z" fill={blueInk} />
              </Svg>
              <Svg w={18} h={14} className="ml-1">
                <path d="M2 1.500h15M10 5h7M10 8.500h7M2 12.500h15" stroke="#333" strokeWidth="1.200" />
                <path d="M9 7L5 3v3H1v2h4v3z" fill={blueInk} />
              </Svg>
            </div>
          </div>
          <div className="flex h-[54px] w-[50px] flex-col items-start justify-between border-l border-[#848484] pl-2">
            <span className="relative pt-0.5 text-[11px] leading-[10px] font-semibold">ab<br />c<span className="text-[#22609f]">↵</span></span>
            <span className="flex items-center gap-2">
              <Svg w={16} h={16}>
                <path d="M.5.5h15v15H.5z" fill="#fff" stroke="#333" />
                <path d="M0 4.500h16M0 11.500h16M8 0v4M8 12v4" stroke="#333" />
                <path d="M3 8h10M5 6L3 8l2 2M11 6l2 2-2 2" stroke={blueInk} />
              </Svg>
              <Chevron />
            </span>
          </div>
        </div>
      </XlGroup>
      <XlGroup label="Número" w="w-[156px]" launcher>
        <div className="pt-[7px] pl-2">
          <MiniSelect value="Personalizado" label="Formato de número" w="w-[140px]" />
        </div>
        <div className="mt-2 flex h-[23px] items-center pl-[11px]">
          <Svg w={17} h={16}>
            <path d="M1 1h15v8H1z" fill="#fff" stroke={blueInk} strokeWidth="2" />
            <circle cx="8" cy="5" r="2" fill={blueInk} />
            <path d="M9 9h7M9 11.500h7M4 12h5M5 15h6" stroke="#e3a75f" strokeWidth="1.600" />
          </Svg>
          <Chevron className="ml-2" />
          <span className="ml-3 text-[15px]">%</span>
          <span className="ml-2.5 text-[9px] font-bold">000</span>
          <span className="mx-2 h-6 w-px bg-[#848484]" />
          <span className="text-right text-[9px] leading-[8px] font-semibold"><span className="text-[#22609f]">←</span>0<br />,00</span>
          <span className="ml-2.5 text-right text-[9px] leading-[8px] font-semibold">,00<br /><span className="text-[#22609f]">→</span>,0</span>
        </div>
      </XlGroup>
      <XlGroup label="Estilos" w="w-[237px]">
        <div className="flex justify-center">
          <XlBig
            w="w-[86px]"
            l1="Formatação"
            l2="Condicional"
            icon={
              <Svg w={30} h={32}>
                <path d="M.5 1.500h27v24H.5z" fill="#fff" stroke="#555" />
                <path d="M7 2h7v5H7zM7 14h10v5H7z" fill="#c94a2a" />
                <path d="M8 8h11v6H8zM7 20h5v6H7z" fill={blueInk} />
                <path d="M0 7.500h28M0 13.500h28M0 19.500h28M7 1v25M21 1v25" stroke="#888" />
                <path d="M15 19h14v12H15z" fill="#fff" stroke="#444" />
                <path d="M18.500 23.500h7M18.500 26.500h7M24 21l-4 8" stroke="#222" strokeWidth="1.200" />
              </Svg>
            }
          />
          <XlBig
            w="w-[84px]"
            l1="Formatar como"
            l2="Tabela"
            icon={
              <Svg w={31} h={35}>
                <path d="M1 4h24v23H1z" fill="#fff" stroke="#555" />
                <path d="M7 10h18v17H7z" fill="#b9cfe8" />
                <path d="M1 10h24M1 16h24M1 22h24M7 4v23M13 4v23M19 4v23" stroke="#888" />
                {brush}
              </Svg>
            }
          />
          <XlBig
            w="w-14"
            l1="Estilos de"
            l2="Célula"
            icon={
              <Svg w={31} h={35}>
                <path d="M1 2h25v24H1z" fill="#fff" stroke="#555" />
                <path d="M6 8h15v12H6z" fill="#b9cfe8" />
                <path d="M1 7.500h25M1 20.500h25M6.500 2v24M20.500 2v24" stroke="#888" />
                {brush}
              </Svg>
            }
          />
        </div>
      </XlGroup>
      <XlGroup label="Células" w="w-[104px]">
        <ul className="flex flex-col pl-2.5 text-[11px]">
          {["Inserir", "Excluir", "Formatar"].map((t, i) => (
            <li key={t} className="flex h-[23px] items-center gap-1">
              <Svg w={17} h={17}>
                {i < 2 ? (
                  <>
                    <path d="M1 1h9v4H1zM1 12h9v4H1zM5.500 1v4M5.500 12v4" fill="#fff" stroke="#333" />
                    {i === 0 ? (
                      <>
                        <path d="M8 6h9v4H8z" fill="#fff" stroke="#333" />
                        <path d="M0 8l4-3v2h4v2H4v2z" fill={blueInk} />
                      </>
                    ) : (
                      <>
                        <path d="M3 6h5v4H3z" fill="#fff" stroke="#333" />
                        <path d="M9 3l7 8M16 3l-7 8" stroke="#c94a2a" strokeWidth="1.800" />
                      </>
                    )}
                  </>
                ) : (
                  <>
                    <path d="M1 6h15v10H1z" fill="#fff" stroke="#333" />
                    <path d="M6 9h5v4H6z" fill={blueInk} />
                    <path d="M1 9h15M1 13h15M6 6v10M11 6v10" stroke="#555" />
                    <path d="M1 2h13M1 0v4M14 0v4" stroke={blueInk} />
                  </>
                )}
              </Svg>
              {t}
              <Chevron className={i < 2 ? "ml-2" : ""} />
            </li>
          ))}
        </ul>
      </XlGroup>
      <XlGroup label="Edição" w="w-[182px]">
        <div className="flex pl-2.5">
          <div className="flex w-9 flex-col">
            <span className="flex h-[23px] items-center gap-1.5">
              <Svg w={17} h={18}><path d="M1 1h14v4h-1c0-2-1-2.500-3-2.500H5l5 6-6 7h8c2 0 2-1 3-3h1l-1 5H1v-1l6-8-6-7z" fill="#222" /></Svg>
              <Chevron />
            </span>
            <span className="flex h-[23px] items-center gap-1.5">
              <Svg w={16} h={16}>
                <path d="M1 1h14v14H1z" fill="#fff" stroke="#444" />
                <path d="M1 1h14v3H1z" fill="#444" />
                <path d="M8 5v8M4.500 10L8 13.500l3.500-3.500" stroke={blueInk} strokeWidth="2" />
              </Svg>
              <Chevron />
            </span>
            <span className="flex h-[23px] items-center gap-1.5">
              <Svg w={16} h={14}>
                <path d="M8 0l6 3-6 8-6-3z" fill="#e2667f" />
                <path d="M2 8l6 3-2 3-5-3z" fill="#eb9aa9" />
              </Svg>
              <Chevron />
            </span>
          </div>
          <XlBig
            w="w-[58px]"
            l1="Classificar"
            l2="e Filtrar"
            icon={
              <Svg w={30} h={34}>
                <path d="M2 15L6 2l4 13M3 11h6" stroke={blueInk} strokeWidth="2" />
                <path d="M2 20h8L2 31h8" stroke="#7b3f9e" strokeWidth="2" />
                <path d="M12 10h17l-7 8v9l-4-2v-7z" fill="#4a4a4a" />
              </Svg>
            }
          />
          <XlBig
            w="w-[72px]"
            l1="Localizar e"
            l2="Selecionar"
            icon={
              <Svg w={28} h={32}>
                <path d="M10 18L2 29" stroke={blueInk} strokeWidth="5" strokeLinecap="round" />
                <circle cx="17" cy="11" r="9.500" fill="#fff" stroke={blueInk} strokeWidth="2" />
              </Svg>
            }
          />
        </div>
      </XlGroup>
    </div>
  );
}

function FormulaBar() {
  return (
    <div className="relative flex h-[46px] items-start pt-2.5 pl-1 text-[13px] text-[#444]">
      <div className="relative">
        <input aria-label="Caixa de nome" defaultValue="AI9" className="h-[26px] w-[103px] border border-[#444] bg-[#b1b1b1] pl-1.5" />
        <Svg w={8} h={5} className="absolute top-2.5 right-1.5"><path d="M0 0h8L4 5z" fill="#333" /></Svg>
      </div>
      <Svg w={3} h={12} className="mx-[13px] mt-[7px]"><path d="M0 0h2v2H0zM0 5h2v2H0zM0 10h2v2H0z" fill="#fff" /></Svg>
      <div className="mr-[3px] flex h-[26px] w-[110px] items-center justify-around border border-[#444] bg-[#b1b1b1] px-1">
        <Svg w={12} h={11}><path d="M1 1l10 9M11 1L1 10" stroke="#888" strokeWidth="1.700" /></Svg>
        <Svg w={14} h={11}><path d="M1 6l4 4 8-9" stroke="#888" strokeWidth="2" /></Svg>
        <span className="font-['Liberation_Serif'] text-base font-bold text-[#333] italic">f<small className="text-[11px]">x</small></span>
      </div>
      <input aria-label="Fórmula" defaultValue="=SOMA(AI4:AI8)" className="h-[26px] min-w-0 flex-1 border border-r-0 border-[#444] bg-[#b1b1b1] pl-3" />
    </div>
  );
}

const columns = ["A", "AD", "AE", "AF", "AG", "AH", "AI", "AJ", "AK"];

const data: Record<number, string[]> = {
  2: ["INVESTIMENTOS (em R$ milhões)", "2016", "2017", "2018", "2019", "2020", "2021", "2022"],
  4: ["Lojas Novas", "10,7", "39,0", "86,7", "179,2", "93,1", "222,2", "36,2"],
  5: ["Reformas", "43,4", "39,8", "54,2", "47,3", "33,3", "50,2", "36,8"],
  6: ["Tecnologia", "54,1", "76,6", "84,9", "118,8", "197,4", "330,6", "441,4"],
  7: ["Logística", "15,1", "12,3", "88,8", "131,3", "138,1", "459,6", "123,0"],
  8: ["Outros", "1,0", "3,1", "49,8", "45,0", "81,9", "101,5", "58,6"],
  9: ["Total", "124,3", "170,8", "364,4", "521,5", "543,9", "1.164,1", "696,1"],
};

const rowClass = (r: number) => (r === 3 ? "h-[21px]" : [11, 12, 13, 15, 17, 18, 19].includes(r) ? "h-6" : "h-[26px]");

function cellStyle(r: number) {
  if (r === 2) return "bg-[#0b3c66] font-bold text-white shadow-[inset_0_3px_0_#118dff]";
  if (r === 9) return "bg-[#f2f2f2] shadow-[inset_0_2px_0_#118dff,inset_0_-2px_0_#118dff]";
  return "";
}

function Grid() {
  return (
    <div className="h-0 flex-1 overflow-hidden bg-white">
      <table className="w-full table-fixed border-separate border-spacing-0">
        <colgroup>
          <col className="w-[42px]" />
          <col />
          <col className="w-[102px]" />
          <col className="w-[102px]" />
          <col className="w-[103px]" />
          <col className="w-[102px]" />
          <col className="w-[98px]" />
          <col className="w-[98px]" />
          <col className="w-[98px]" />
          <col className="w-[98px]" />
          <col className="w-[13px]" />
        </colgroup>
        <thead>
          <tr className="h-[29px] bg-[#666] text-xl leading-[26px] text-white">
            <th className="border-r border-b border-[#999] p-0 align-bottom">
              <Svg w={22} h={22} className="mr-[3px] mb-[3px] ml-auto"><path d="M22 0v22H0z" fill="#f0f0f0" /></Svg>
            </th>
            {columns.map((c) => (
              <th key={c} className="border-r border-b border-[#999] p-0 pt-0.5 font-normal">{c}</th>
            ))}
            <th className="border-b border-[#999] p-0" />
          </tr>
        </thead>
        <tbody>
          {Array.from({ length: 30 }, (_, i) => i + 1).map((r) => {
            const d = data[r];
            return (
              <tr key={r} className={rowClass(r)}>
                <th className={`border-r border-b border-[#999] bg-[#666] p-0 text-center text-[19px] leading-5 font-normal text-white ${r === 1 ? "align-top" : ""}`}>{r}</th>
                <td
                  className={`border-r border-[#999] p-0 pl-2 leading-5 ${r === 9 ? "text-base font-bold" : "font-[Lato] text-[15px]"} ${d ? cellStyle(r) : ""}`}
                >
                  {d?.[0]}
                </td>
                <td className="p-0" />
                {Array.from({ length: 7 }, (_, k) => (
                  <td key={k} className={`p-0 text-right font-[Lato] text-[15px] leading-5 ${r === 2 ? "pr-[3px]" : "pr-2"} ${d ? cellStyle(r) : ""}`}>
                    {d?.[k + 1]}
                  </td>
                ))}
                <td className="p-0" />
              </tr>
            );
          })}
        </tbody>
      </table>
    </div>
  );
}

function SheetTabs() {
  const rest = ["11. Receita e Lojas por Canal", "Num Canais", "12. Vendas e Lojas por Canal", "13. Luizacred"];
  return (
    <div className="flex h-[29px] shrink-0 items-start overflow-hidden border-t border-b border-t-[#999] border-b-[#444] text-xs whitespace-nowrap text-white">
      <span className="flex h-7 w-[100px] items-center gap-[22px] pl-7">
        <Svg w={5} h={8}><path d="M5 0v8L0 4z" fill="#fff" /></Svg>
        <Svg w={5} h={8}><path d="M0 0v8l5-4z" fill="#fff" /></Svg>
        <b>...</b>
      </span>
      <button className="my-0.5 h-6 border-l border-[#999] px-4">9. Resultado Financeiro</button>
      <button className="h-[25px] border-b-2 border-[#217346] bg-white px-[13px] pt-1 font-bold text-[#217346]">10.Investimentos</button>
      {rest.map((t, i) => (
        <button key={t} className={`my-0.5 h-6 px-[17px] ${i < 3 ? "border-r border-[#999]" : ""}`}>{t}</button>
      ))}
      <b className="pt-1">...</b>
      <button aria-label="Nova planilha" className="ml-4 pt-1.5">
        <Svg w={16} h={16}>
          <circle cx="8" cy="8" r="7" stroke="#fff" strokeWidth="1.500" />
          <path d="M8 4v8M4 8h8" stroke="#fff" strokeWidth="2" />
        </Svg>
      </button>
      <Svg w={3} h={12} className="mt-2 ml-auto"><path d="M0 0h2v2H0zM0 5h2v2H0zM0 10h2v2H0z" fill="#fff" /></Svg>
      <div className="mt-1.5 ml-4 flex h-4 w-[181px] items-stretch">
        <button aria-label="Rolar à esquerda" className="flex w-[15px] items-center justify-center bg-[#d0d0d0]"><Svg w={5} h={8}><path d="M5 0v8L0 4z" fill="#222" /></Svg></button>
        <span className="flex-1 bg-[#444]" />
        <span className="w-8 bg-[#d0d0d0]" />
        <button aria-label="Rolar à direita" className="ml-0.5 flex w-[15px] items-center justify-center bg-[#d0d0d0]"><Svg w={5} h={8}><path d="M0 0v8l5-4z" fill="#222" /></Svg></button>
      </div>
    </div>
  );
}

function StatusBar() {
  return (
    <footer className="flex h-[21px] shrink-0 items-center overflow-hidden pl-[7px] text-[11px] whitespace-nowrap text-white">
      <span>Pronto</span>
      <Svg w={16} h={15} className="ml-[18px]">
        <path d="M6 1a6 6 0 0 0 0 12M10 2a6 6 0 0 1 3 4M8 4v5M5 7h7M8 11l3 3 4-6" stroke="#fff" strokeWidth="1.200" />
      </Svg>
      <span className="ml-1">Acessibilidade: tudo certo</span>
      <span className="ml-auto flex gap-4">
        <span className="whitespace-pre">Média:  801,4</span>
        <span>Contagem: 3</span>
        <span className="ml-1 whitespace-pre">Soma:  2.404,1</span>
      </span>
      <button className="ml-[19px] flex items-center gap-1">
        <Svg w={16} h={15}>
          <path d="M0 1h12v5H8l-2 5H4L0 9z" fill="#fff" />
          <circle cx="11" cy="10" r="3.500" stroke="#fff" strokeWidth="2" />
          <path d="M2 14h5" stroke="#fff" />
        </Svg>
        Exibir Configurações
      </button>
      <button aria-label="Normal" className="ml-[18px] flex h-full w-10 items-center justify-center bg-[#444]">
        <Svg w={13} h={13}><path d="M.5.5h12v12H.5zM0 4.500h13M0 8.500h13M4.500 0v13M8.500 0v13" stroke="#fff" /></Svg>
      </button>
      <button aria-label="Layout da página" className="flex w-10 justify-center">
        <Svg w={14} h={13}><path d="M.5.5h13v12H.5zM3.500 2.500h7v8h-7zM5 4.500h4M5 6.500h4M5 8.500h4" stroke="#fff" /></Svg>
      </button>
      <button aria-label="Quebra de página" className="flex w-10 justify-center">
        <Svg w={14} h={13}><path d="M0 0h14v13H0z" fill="#fff" /><path d="M3 0v7h3V0M8 0v7h3V0" fill="#666" /></Svg>
      </button>
      <span className="ml-1.5 text-base leading-none">−</span>
      <input
        type="range"
        aria-label="Zoom"
        defaultValue={60}
        className="mx-1 h-3 w-[100px] appearance-none bg-[linear-gradient(#fff,#fff)] bg-[length:100%_1px] bg-center bg-no-repeat [&::-webkit-slider-thumb]:h-3 [&::-webkit-slider-thumb]:w-[5px] [&::-webkit-slider-thumb]:appearance-none [&::-webkit-slider-thumb]:bg-white"
      />
      <span className="text-base leading-none">+</span>
      <span className="ml-3 w-6 overflow-hidden">160%</span>
    </footer>
  );
}

function Excel() {
  return (
    <main className="relative flex min-w-0 flex-col overflow-hidden bg-[#666]">
      <Circuit />
      <XlTitle />
      <XlTabs />
      <XlRibbon />
      <FormulaBar />
      <Grid />
      <SheetTabs />
      <StatusBar />
    </main>
  );
}

/* ---------- page ---------- */

export default function App() {
  return (
    <div className="relative grid h-screen min-h-[1031px] grid-cols-[1281fr_1256fr] overflow-hidden font-['Noto_Sans','Open_Sans',sans-serif]">
      <PowerBi />
      <Excel />
      <svg viewBox="0 0 2537 1031" className="pointer-events-none absolute top-0 left-0 z-20 w-full" fill="none" aria-hidden="true">
        <rect x="2332" y="253" width="112" height="179" stroke="#f00" strokeWidth="3" />
        <path d="M2327 357L742 547.500" stroke="#f00" strokeWidth="3" />
        <path d="M729 549l15-6 1 9z" fill="#f00" />
      </svg>
    </div>
  );
}
